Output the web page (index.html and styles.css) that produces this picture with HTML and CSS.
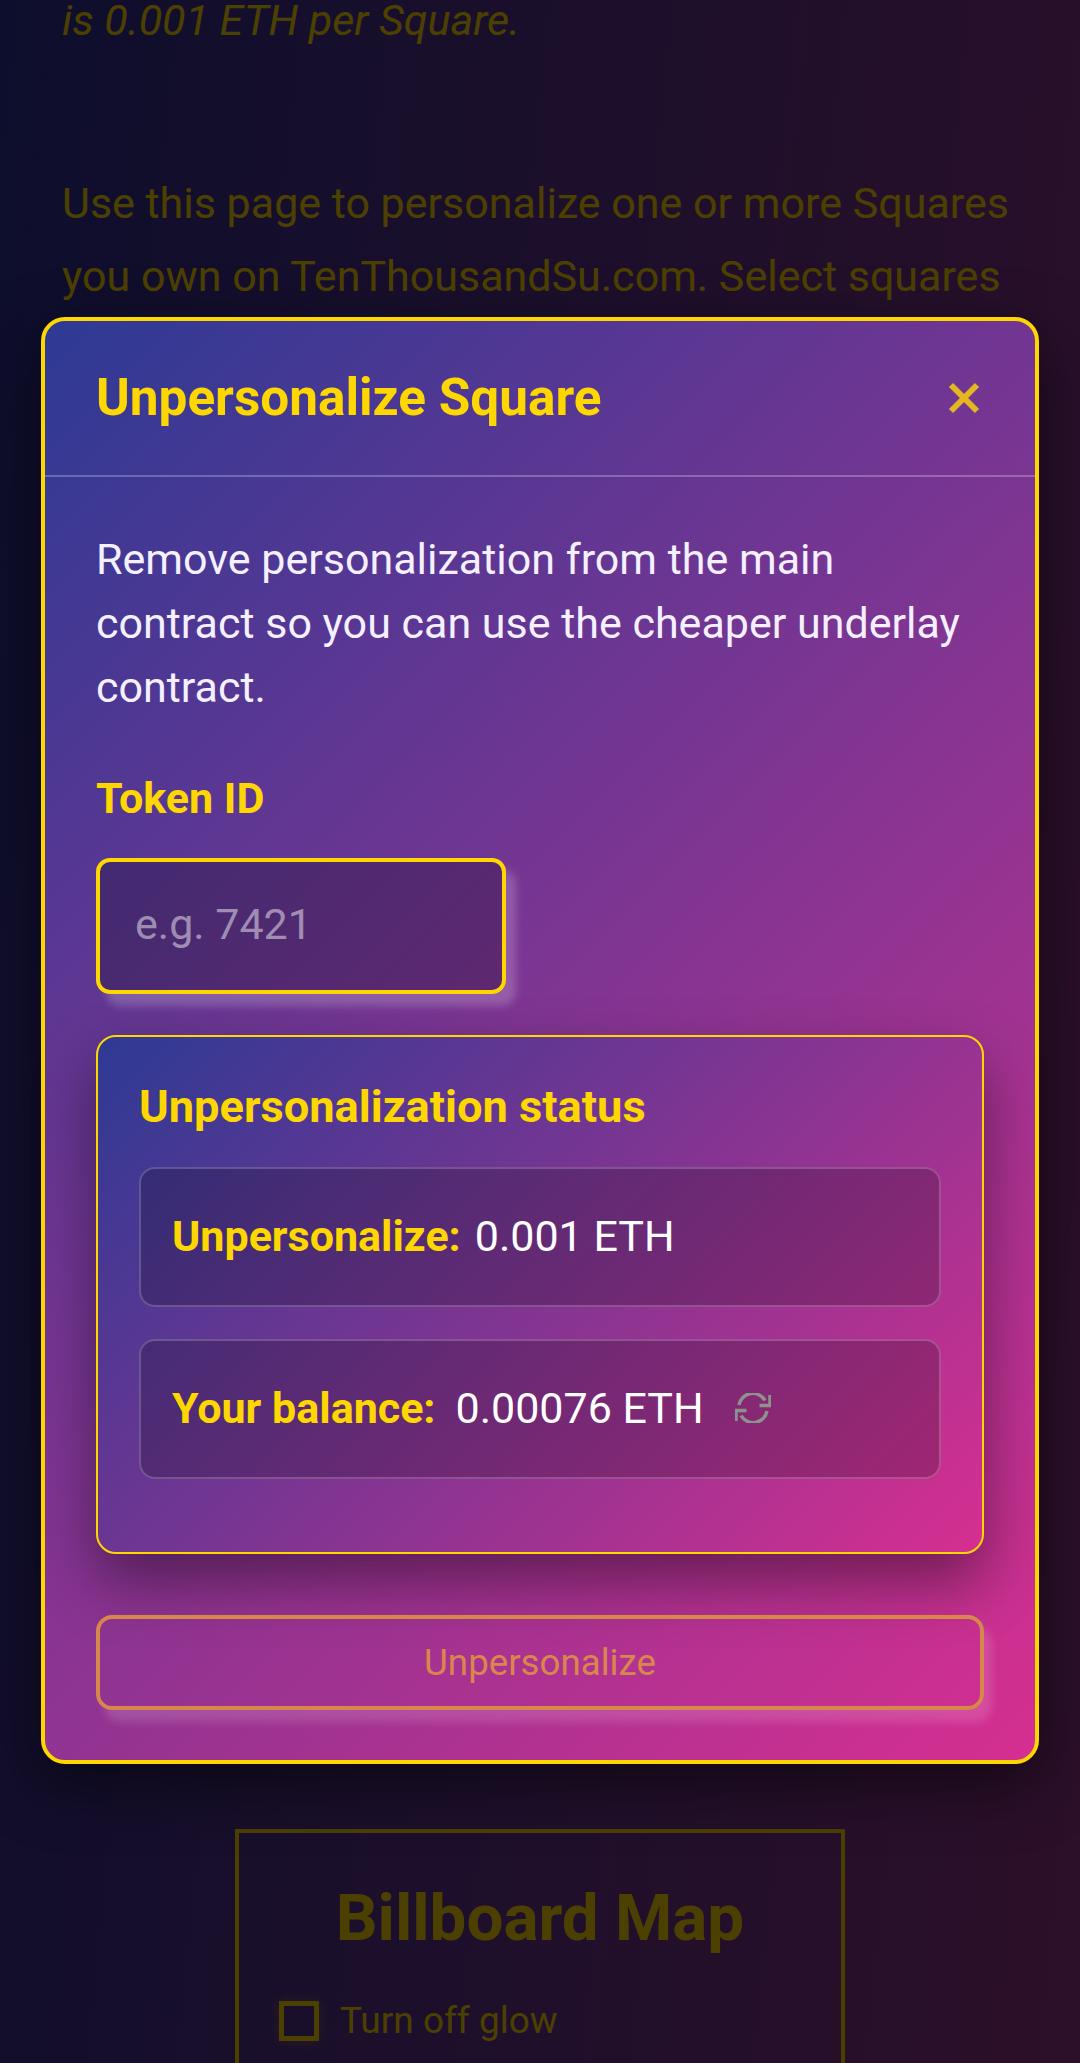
FILE: index.html
```html
<!DOCTYPE html>
<html lang="en">
<head>
<meta charset="utf-8">
<title>Unpersonalize Square</title>
<link rel="stylesheet" href="styles.css">
</head>
<body>
<main class="page">
  <p class="note">is 0.001 ETH per Square.</p>
  <p class="intro">Use this page to personalize one or more Squares you own on TenThousandSu.com. Select squares</p>
  <section class="billboard">
    <h2 class="billboard-title">Billboard Map</h2>
    <label class="glow-toggle"><span class="glow-box"></span>Turn off glow</label>
  </section>
</main>
<div class="overlay">
  <div class="modal">
    <header class="modal-header">
      <h1 class="modal-title">Unpersonalize Square</h1>
      <svg class="close-icon" viewBox="0 0 32 32" aria-label="Close"><path d="M3 3 29 29M29 3 3 29"/></svg>
    </header>
    <div class="modal-body">
      <p class="lead">Remove personalization from the main contract so you can use the cheaper underlay contract.</p>
      <label class="field-label">Token ID</label>
      <input class="token-input" type="text" placeholder="e.g. 7421">
      <section class="status">
        <h3 class="status-title">Unpersonalization status</h3>
        <div class="status-row"><strong class="status-key">Unpersonalize:</strong><span>0.001 ETH</span></div>
        <div class="status-row"><strong class="status-key status-key-wide">Your balance:</strong><span>0.00076 ETH</span>
          <svg class="refresh-icon" viewBox="0 0 36 30" aria-label="Refresh"><path d="M4 12A14 14 0 0 1 30 7.500M35 2V12.500H24.500M32 18A14 14 0 0 1 6 22.500M1 28V17.500H11.500"/></svg>
        </div>
      </section>
      <button class="submit" type="button">Unpersonalize</button>
    </div>
  </div>
</div>
</body>
</html>
```
FILE: styles.css
```css
* { box-sizing: border-box; }
html, body { margin: 0; height: 2063px; overflow: hidden; }
body {
  position: relative;
  font-family: Roboto, sans-serif;
  color: #ffd700;
  background: linear-gradient(96deg, #2d3096 0%, #96358a 100%);
}
.page { padding: 0 62px; }
.note { margin: 0; font-size: 43px; line-height: 40px; font-style: italic; }
.intro { margin: 127px 0 0; font-size: 43px; line-height: 73px; height: 1662px; }
.billboard {
  width: 610px;
  height: 300px;
  margin: 0 auto;
  padding: 50px 40px 0;
  border: 4px solid #ffd700;
  border-bottom: 0;
}
.billboard-title { margin: 0 0 48px; text-align: center; font-size: 65.5px; line-height: 70px; font-weight: 700; }
.glow-toggle { display: flex; align-items: center; gap: 21px; font-size: 37px; line-height: 40px; }
.glow-box { width: 40px; height: 40px; border: 5px solid #ffd700; box-shadow: 0 0 12px rgba(255,215,0,.3); }
.overlay {
  position: absolute;
  inset: 0;
  padding: 317px 41px 0;
  background: rgba(0,0,0,.7);
}
.modal {
  height: 1447px;
  border: 4px solid #ffd700;
  border-radius: 24px;
  background: linear-gradient(135deg, #2d3a94 0%, #d62f90 100%);
  box-shadow: 0 20px 60px rgba(0,0,0,.5);
}
.modal-header {
  height: 156px;
  padding: 0 55px 0 51px;
  display: flex;
  align-items: center;
  justify-content: space-between;
  border-bottom: 2px solid rgba(255,255,255,.25);
}
.modal-title { margin: 0; font-size: 51.3px; line-height: 54px; font-weight: 700; }
.close-icon { width: 32px; height: 32px; fill: none; stroke: #e4b722; stroke-width: 6; }
.modal-body { padding: 50px 51px 0; }
.lead { margin: 0; font-size: 43px; line-height: 64px; color: #f5f0ff; }
.field-label { display: block; margin-top: 54px; font-size: 43px; line-height: 50px; font-weight: 700; }
.token-input {
  display: block;
  width: 410px;
  height: 136px;
  margin-top: 35px;
  padding: 0 35px 4px;
  border: 4px solid #ffd700;
  border-radius: 14px;
  background: rgba(0,0,0,.23);
  box-shadow: 10px 12px 8px rgba(255,255,255,.2);
  font: 43px Roboto, sans-serif;
  color: #fff;
  outline: 0;
}
.token-input::placeholder { color: rgba(255,255,255,.48); }
.status {
  margin-top: 41px;
  height: 519px;
  padding: 46px 41px 0;
  border: 2px solid #ffd700;
  border-radius: 20px;
  background: linear-gradient(135deg, #2d3a94 0%, #d62f90 100%);
  box-shadow: 0 28px 60px rgba(0,0,0,.42);
}
.status-title { margin: 0 0 36px; font-size: 45.2px; line-height: 48px; font-weight: 700; }
.status-row {
  height: 140px;
  margin-bottom: 32px;
  padding: 0 31px 2px;
  display: flex;
  align-items: center;
  border: 2px solid rgba(255,255,255,.2);
  border-radius: 16px;
  background: rgba(0,0,0,.2);
  font-size: 43px;
  color: #fff;
}
.status-key { color: #ffd700; margin-right: 14px; }
.status-key-wide { margin-right: 20px; }
.refresh-icon { width: 36px; height: 30px; margin-left: 31px; fill: none; stroke: #8d928c; stroke-width: 3.500; }
.submit {
  display: block;
  width: 100%;
  height: 95px;
  margin-top: 61px;
  border: 4px solid #d8874c;
  border-radius: 16px;
  background: transparent;
  box-shadow: 8px 12px 8px rgba(255,255,255,.14);
  font: 36.7px Roboto, sans-serif;
  color: #d8874c;
}
```
